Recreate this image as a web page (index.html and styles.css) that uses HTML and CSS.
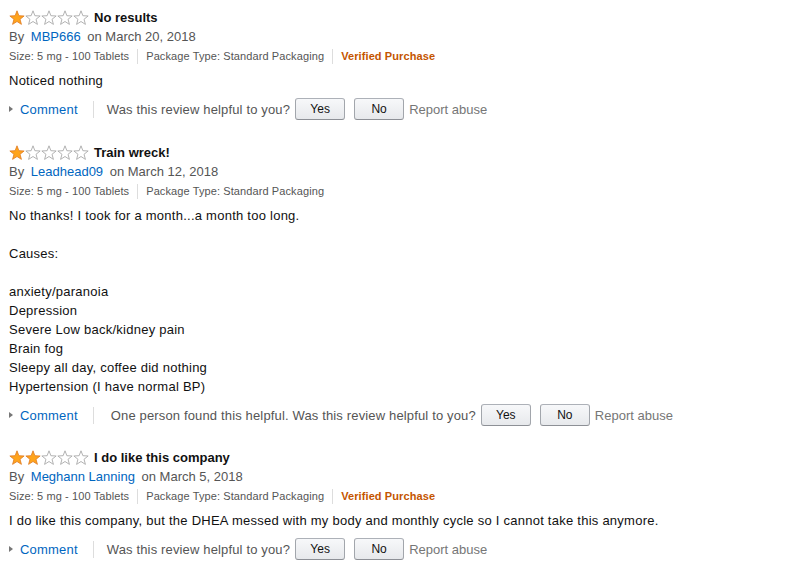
FILE: index.html
```html
<!DOCTYPE html>
<html>
<head>
<meta charset="utf-8">
<link rel="stylesheet" href="styles.css">
</head>
<body>
<svg width="0" height="0" class="defs">
  <defs>
    <symbol id="star-full" viewBox="0 0 16 16">
      <path d="M8 0.8L9.88 5.71L15.13 5.98L11.04 9.29L12.41 14.37L8 11.5L3.59 14.37L4.96 9.29L0.87 5.98L6.12 5.71Z" fill="#ffa41c" stroke="#de7921" stroke-width="0.8" stroke-linejoin="round"/>
    </symbol>
    <symbol id="star-empty" viewBox="0 0 16 16">
      <path d="M8 0.8L9.88 5.71L15.13 5.98L11.04 9.29L12.41 14.37L8 11.5L3.59 14.37L4.96 9.29L0.87 5.98L6.12 5.71Z" fill="#fff" stroke="#a9a9a9" stroke-width="0.9" stroke-linejoin="round"/>
    </symbol>
  </defs>
</svg>

<div class="reviews">
  <div class="review">
    <div class="title-row">
      <span class="stars">
        <svg class="star"><use href="#star-full"/></svg><svg class="star"><use href="#star-empty"/></svg><svg class="star"><use href="#star-empty"/></svg><svg class="star"><use href="#star-empty"/></svg><svg class="star"><use href="#star-empty"/></svg>
      </span>
      <span class="title">No results</span>
    </div>
    <div class="byline">By <a class="author">MBP666</a> on March 20, 2018</div>
    <div class="meta"><span>Size: 5 mg - 100 Tablets</span><span class="sep"></span><span>Package Type: Standard Packaging</span><span class="sep"></span><span class="verified">Verified Purchase</span></div>
    <div class="body">Noticed nothing</div>
    <div class="actions">
      <a class="comment"><span class="tri"></span>Comment</a>
      <span class="sep tall"></span>
      <span class="helpful">Was this review helpful to you?</span>
      <button class="btn">Yes</button>
      <button class="btn">No</button>
      <span class="report">Report abuse</span>
    </div>
  </div>

  <div class="review">
    <div class="title-row">
      <span class="stars">
        <svg class="star"><use href="#star-full"/></svg><svg class="star"><use href="#star-empty"/></svg><svg class="star"><use href="#star-empty"/></svg><svg class="star"><use href="#star-empty"/></svg><svg class="star"><use href="#star-empty"/></svg>
      </span>
      <span class="title">Train wreck!</span>
    </div>
    <div class="byline">By <a class="author">Leadhead09</a> on March 12, 2018</div>
    <div class="meta"><span>Size: 5 mg - 100 Tablets</span><span class="sep"></span><span>Package Type: Standard Packaging</span></div>
    <div class="body">No thanks! I took for a month...a month too long.<br><br>Causes:<br><br>anxiety/paranoia<br>Depression<br>Severe Low back/kidney pain<br>Brain fog<br>Sleepy all day, coffee did nothing<br>Hypertension (I have normal BP)</div>
    <div class="actions">
      <a class="comment"><span class="tri"></span>Comment</a>
      <span class="sep tall"></span>
      <span class="helpful with-count">One person found this helpful. Was this review helpful to you?</span>
      <button class="btn">Yes</button>
      <button class="btn">No</button>
      <span class="report">Report abuse</span>
    </div>
  </div>

  <div class="review">
    <div class="title-row">
      <span class="stars">
        <svg class="star"><use href="#star-full"/></svg><svg class="star"><use href="#star-full"/></svg><svg class="star"><use href="#star-empty"/></svg><svg class="star"><use href="#star-empty"/></svg><svg class="star"><use href="#star-empty"/></svg>
      </span>
      <span class="title">I do like this company</span>
    </div>
    <div class="byline">By <a class="author">Meghann Lanning</a> on March 5, 2018</div>
    <div class="meta"><span>Size: 5 mg - 100 Tablets</span><span class="sep"></span><span>Package Type: Standard Packaging</span><span class="sep"></span><span class="verified">Verified Purchase</span></div>
    <div class="body">I do like this company, but the DHEA messed with my body and monthly cycle so I cannot take this anymore.</div>
    <div class="actions">
      <a class="comment"><span class="tri"></span>Comment</a>
      <span class="sep tall"></span>
      <span class="helpful">Was this review helpful to you?</span>
      <button class="btn">Yes</button>
      <button class="btn">No</button>
      <span class="report">Report abuse</span>
    </div>
  </div>
</div>
</body>
</html>
```

FILE: styles.css
```css
* { box-sizing: border-box; }
html, body { background: #fff; }
body {
  margin: 0;
  padding: 8px 9px 0 9px;
  font-family: "Liberation Sans", Arial, sans-serif;
  font-size: 13px;
  line-height: 19px;
  color: #111;
}
.defs { position: absolute; width: 0; height: 0; overflow: hidden; }
.review { margin-bottom: 23px; }
.review:nth-child(2) { margin-bottom: 22px; }
.title-row { display: flex; align-items: center; height: 19px; }
.stars { display: flex; margin-right: 5px; }
.star { width: 16px; height: 16px; display: block; }
.title { font-weight: bold; }
.byline { color: #555; }
.author { color: #0066c0; margin: 0 3px; text-decoration: none; }
.meta {
  display: flex; align-items: center;
  font-size: 11px; color: #555;
  letter-spacing: 0.1px;
  margin-top: 1px;
}
.meta .sep { width: 1px; height: 15px; background: #ddd; margin: 0 8px; }
.verified { color: #c45500; font-weight: bold; }
.body { margin-top: 5px; letter-spacing: 0.25px; }
.actions { display: flex; align-items: center; margin-top: 8px; height: 22px; }
.comment { color: #0066c0; display: flex; align-items: center; letter-spacing: 0.2px; }
.tri {
  width: 0; height: 0;
  border-top: 3px solid transparent;
  border-bottom: 3px solid transparent;
  border-left: 4px solid #777;
  margin: 0 7px 0 0;
}
.sep.tall { width: 1px; height: 17px; background: #ddd; margin: 0 13px 0 15px; }
.helpful { color: #555; margin-right: 5px; letter-spacing: 0.15px; }
.helpful.with-count { margin-left: 4px; }
.btn {
  font-family: inherit;
  font-size: 12px;
  color: #111;
  width: 50px; height: 22px;
  margin: 0 9px 0 0;
  padding: 0;
  border: 1px solid #adb1b8;
  border-color: #adb1b8 #a2a6ac #8d9096;
  border-radius: 3px;
  background: linear-gradient(to bottom, #f7f8fa, #e7e9ec);
}
.btn + .btn { margin-right: 5px; }
.report { color: #767676; }
```
